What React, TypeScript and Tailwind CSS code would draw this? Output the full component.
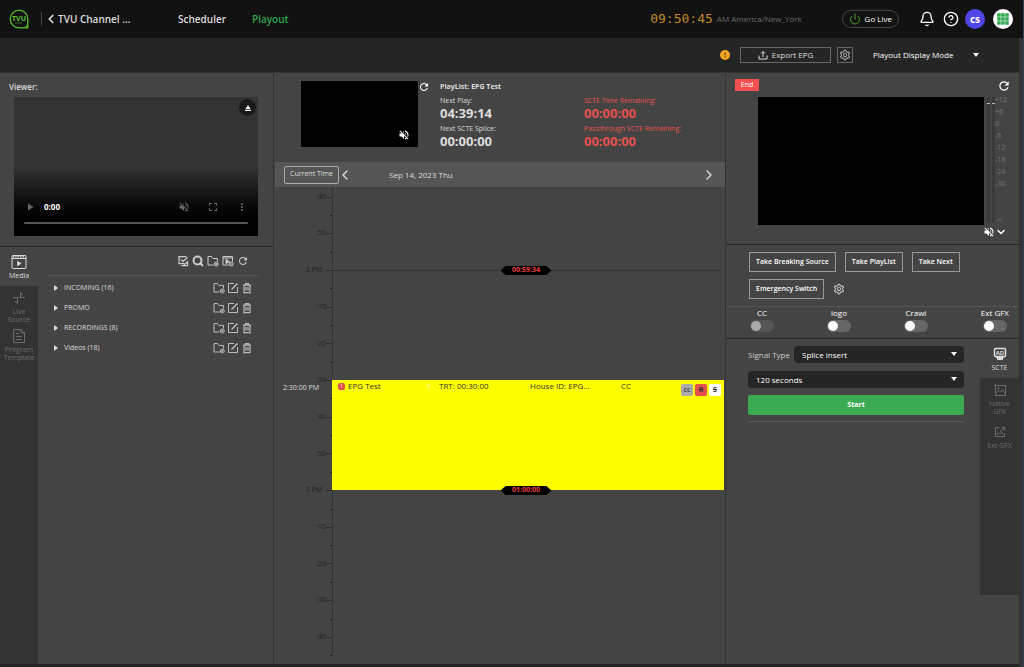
import { ReactNode } from 'react';
import { AiOutlineSetting } from 'react-icons/ai';
import { BsExclamationCircleFill } from 'react-icons/bs';
import {
  MdEject,
  MdFullscreen,
  MdMoreVert,
  MdPlayArrow,
  MdRefresh,
  MdVolumeOff,
} from 'react-icons/md';
import {
  Bell,
  ChevronDown,
  ChevronLeft,
  ChevronRight,
  CircleHelp,
  Power,
  Search,
} from 'lucide-react';

const folders = ['INCOMING (16)', 'PROMO', 'RECORDINGS (8)', 'Videos (18)'];

const ticks = [
  ':40', ':50', '2 PM', ':10', ':20', ':30', ':40', ':50', '3 PM', ':10', ':20', ':30', ':40',
];

const levels = ['+12', '+6', '0', '-6', '-12', '-18', '-24', '-30'];

const switches = [
  { id: 'cc', label: 'CC', disabled: true },
  { id: 'logo', label: 'logo', disabled: false },
  { id: 'crawl', label: 'Crawl', disabled: false },
  { id: 'ext-gfx', label: 'Ext GFX', disabled: false },
];

const Logo = () => (
  <svg className="size-5" viewBox="0 0 40 40" fill="none" aria-label="TVU">
    <path
      d="M20 2.5a17.5 17.5 0 1 0 0 35h17.5V20A17.5 17.5 0 0 0 20 2.5Z"
      stroke="#4fa82e"
      strokeWidth="3"
    />
    <path d="M38 26v12H26c6-1 11-6 12-12Z" fill="#4fa82e" />
    <text
      x="20"
      y="23"
      textAnchor="middle"
      fontSize="14"
      fontWeight="700"
      fontFamily="Open Sans, sans-serif"
      fill="#5cbf36"
    >
      TVU
    </text>
    <path d="M12 28h14" stroke="#35701f" strokeWidth="2" />
  </svg>
);

const AppsIcon = () => (
  <svg className="size-5" viewBox="0 0 20 20">
    <circle cx="10" cy="10" r="10" fill="#fff" />
    {[4, 8, 12].map((y) =>
      [4, 8, 12].map((x) => (
        <rect key={`${x}-${y}`} x={x + 0.2} y={y + 0.2} width="3.5" height="3.5" fill="#2fa84f" />
      ))
    )}
  </svg>
);

const ExportIcon = () => (
  <svg className="size-2.5" viewBox="0 0 10 10" fill="none" stroke="currentColor">
    <path d="M1 5.500v3.500h8V5.500M5 7V1.500M3 3.500l2-2 2 2" />
  </svg>
);

const CheckAllIcon = () => (
  <svg className="size-3" viewBox="0 0 24 24" fill="none" stroke="currentColor" strokeWidth="2.5">
    <path d="M19 3H4v14h8M8 9l4 4 9-8" />
    <path d="M9 21h12v-9" />
    <path d="m12 16 3 3 6-5" />
  </svg>
);

const FolderAddIcon = () => (
  <svg className="size-3" viewBox="0 0 24 24" fill="none" stroke="currentColor" strokeWidth="2">
    <path d="M13 20H2V3h7l3 4h9v6" />
    <circle cx="18.5" cy="18" r="4" />
    <path d="M18.5 16v4M16.5 18h4" />
  </svg>
);

const PlayFileIcon = () => (
  <svg className="size-3" viewBox="0 0 24 24" fill="none" stroke="currentColor" strokeWidth="2">
    <path d="M13 20H2V3h19v10M2 6h19" />
    <path d="m8 9 7 4-7 4Z" fill="currentColor" />
    <circle cx="18.5" cy="18" r="4" />
    <path d="M16.5 18h4" />
  </svg>
);

const EditIcon = () => (
  <svg className="size-3" viewBox="0 0 24 24" fill="none" stroke="currentColor" strokeWidth="2">
    <path d="M14 3H3v18h18V10" />
    <path d="M9 15 21 3" strokeWidth="3" />
  </svg>
);

const TrashIcon = () => (
  <svg className="size-3" viewBox="0 0 24 24" fill="none" stroke="currentColor" strokeWidth="2.5">
    <path d="M4 6h16M9 6V3h6v3M6 6v15h12V6M10 10v7M14 10v7" />
  </svg>
);

const MediaIcon = () => (
  <svg className="size-4" viewBox="0 0 16 16" fill="none" stroke="currentColor">
    <rect x="1" y="1.5" width="14" height="13" rx="1" />
    <path d="M1 4.5h14" />
    <path d="M2 2.5h12" strokeWidth="2" strokeDasharray="1.2 1.2" />
    <path d="m6.2 6.8 4.3 2.7-4.3 2.7Z" fill="currentColor" stroke="none" />
  </svg>
);

const LiveIcon = () => (
  <svg className="size-4" viewBox="0 0 16 16" fill="none" stroke="currentColor">
    <path d="M2 7.500h5.500M8.500 7.500h5.500M9.500 7.500V3M6.500 7.500V13" />
    <path d="M9.500 2.500 12 5M6.500 13.500 4 11" />
  </svg>
);

const TemplateIcon = () => (
  <svg className="size-4" viewBox="0 0 16 16" fill="none" stroke="currentColor">
    <path d="M2.500 1.500h7.500l3.500 3.500v9.500h-11ZM10 1.500V5h3.500M5 5.500h3M5 8.500h6M5 11.500h6" />
  </svg>
);

const ScteIcon = () => (
  <svg className="size-4" viewBox="0 0 16 16" fill="none" stroke="currentColor">
    <rect x="2.500" y="2.500" width="11" height="8" rx="1" strokeWidth="1.500" />
    <text
      x="8"
      y="9"
      textAnchor="middle"
      fontSize="6"
      fontWeight="700"
      fontFamily="Open Sans, sans-serif"
      fill="currentColor"
      stroke="none"
    >
      AD
    </text>
    <path d="M4 11h8l-1.500 3h-5Z" fill="currentColor" stroke="none" />
  </svg>
);

const NativeGfxIcon = () => (
  <svg className="size-4" viewBox="0 0 16 16" fill="none" stroke="currentColor">
    <path d="M3.500 2v11.500H14M2 3.500h11.500V14M4 11l2.500-3 2 2 2-2.500 2.500 4" />
    <circle cx="6.500" cy="6" r="0.700" />
  </svg>
);

const ExtGfxIcon = () => (
  <svg className="size-4" viewBox="0 0 16 16" fill="none" stroke="currentColor">
    <path d="M7 3.500H3.500v9h9V9M9.500 3.500h3V6.500M12.500 3.500 8 8M4.500 11l2-2.500 1.500 1.500 1.500-1.500 2 2" />
  </svg>
);

const CaretDown = ({ className }: { className: string }) => (
  <svg className={className} viewBox="0 0 6 4" fill="currentColor">
    <path d="M0 0h6L3 4Z" />
  </svg>
);

const OutlineButton = ({ children }: { children: ReactNode }) => (
  <button className="h-5 border border-[#999] px-1.5 text-[7px] font-semibold text-white">
    {children}
  </button>
);

const SideTab = ({
  icon,
  label,
  active = false,
}: {
  icon: ReactNode;
  label: string;
  active?: boolean;
}) => (
  <button
    className={`flex w-full flex-col items-center gap-0.5 text-[7px] leading-[8px] whitespace-normal ${
      active ? 'h-[39px] justify-center bg-[#444] text-[#ddd]' : 'px-1 pt-1 text-[#6c6c6c]'
    }`}
  >
    {icon}
    {label}
  </button>
);

const Header = () => (
  <header className="flex h-[38px] items-center bg-[#121212] pr-2.5 pl-[9px]">
    <Logo />
    <span className="ml-3 h-3.5 w-px bg-[#444]" />
    <button className="ml-1 flex w-[132px] flex-none items-center text-[10px] font-semibold text-[#ddd]">
      <ChevronLeft className="-ml-0.5 size-3.5" strokeWidth={3} />
      TVU Channel ...
    </button>
    <nav className="flex gap-[26px] text-[10px] font-semibold">
      <a href="#scheduler" className="text-[#ddd]">
        Scheduler
      </a>
      <a href="#playout" className="text-[#2fa84f]">
        Playout
      </a>
    </nav>
    <div className="ml-auto flex items-center">
      <time className="font-['DejaVu_Sans_Mono',monospace] text-[13px] text-[#c08a2a]">09:50:45</time>
      <span className="ml-1 text-[8px] text-[#6c6c6c]">AM America/New_York</span>
      <button className="ml-10 flex h-[18px] items-center gap-1 rounded-full border border-[#444] px-1.5 text-[8px] text-white">
        <Power className="size-3 text-[#4fa82e]" />
        Go Live
      </button>
      <button className="ml-5 text-white" aria-label="Notifications">
        <Bell className="size-4" />
      </button>
      <button className="ml-2 text-white" aria-label="Help">
        <CircleHelp className="size-4" />
      </button>
      <button className="ml-1.5 size-5 rounded-full bg-[#4f46e5] text-[10px] font-bold text-white">
        cs
      </button>
      <button className="ml-2" aria-label="Apps">
        <AppsIcon />
      </button>
    </div>
  </header>
);

const Toolbar = () => (
  <div className="flex h-[34px] items-center justify-end bg-[#252525] pr-10">
    <BsExclamationCircleFill className="size-2.5 text-[#f5a623]" />
    <button className="ml-2.5 flex h-4 w-[91px] items-center justify-center gap-1 border border-[#666] text-[8px] text-[#ddd]">
      <ExportIcon />
      Export EPG
    </button>
    <button
      className="ml-1.5 flex size-4 items-center justify-center border border-[#666] text-[#bbb]"
      aria-label="Settings"
    >
      <AiOutlineSetting className="size-3" />
    </button>
    <div className="relative ml-5 flex w-[106px] items-center">
      <select
        className="h-4 w-full appearance-none bg-transparent text-[8px] text-white"
        aria-label="Playout Display Mode"
      >
        <option>Playout Display Mode</option>
      </select>
      <CaretDown className="pointer-events-none absolute right-0 h-1 w-1.5 text-white" />
    </div>
  </div>
);

const Viewer = () => (
  <section className="h-[174px] border-b border-[#2a2a2a] pt-2 pr-[15px] pl-[9px]">
    <h2 className="text-[8px] leading-3 font-semibold text-[#ddd]">Viewer:</h2>
    <div className="mt-1 ml-[5px] flex h-[139px] flex-col bg-linear-to-b from-[#333] from-50% to-black px-2.5 pt-0.5 pb-3">
      <button
        className="-mr-2 ml-auto flex size-[17px] items-center justify-center rounded-full bg-[#1a1a1a] text-white"
        aria-label="Eject"
      >
        <MdEject className="size-2.5" />
      </button>
      <div className="mt-auto flex items-center text-[#666]">
        <MdPlayArrow className="size-3" />
        <span className="ml-2 text-[8px] font-bold text-white">0:00</span>
        <MdVolumeOff className="ml-auto size-3" />
        <MdFullscreen className="ml-4 size-3.5" />
        <MdMoreVert className="ml-4 size-3" />
      </div>
      <div className="mt-2 h-0.5 rounded-full bg-[#555]" />
    </div>
  </section>
);

const Library = () => (
  <section className="flex flex-1">
    <div className="w-[38px] bg-[#333]">
      <SideTab active icon={<MediaIcon />} label="Media" />
      <SideTab icon={<LiveIcon />} label="Live Source" />
      <SideTab icon={<TemplateIcon />} label="Program Template" />
    </div>
    <div className="flex-1 pr-3.5 pl-2.5">
      <div className="flex h-[29px] items-center justify-end gap-[3px] border-b border-[#555] pr-2.5 text-[#ccc]">
        <button aria-label="Select all">
          <CheckAllIcon />
        </button>
        <button aria-label="Search">
          <Search className="size-3" strokeWidth={4} />
        </button>
        <button aria-label="New folder">
          <FolderAddIcon />
        </button>
        <button aria-label="Preview">
          <PlayFileIcon />
        </button>
        <button aria-label="Refresh">
          <MdRefresh className="size-3" />
        </button>
      </div>
      <ul className="pt-0.5">
        {folders.map((folder) => (
          <li key={folder} className="flex h-5 items-center px-1.5 text-[7px] text-[#ddd]">
            <svg className="mr-1.5 h-1.5 w-1" viewBox="0 0 4 6" fill="currentColor">
              <path d="M0 0v6l4-3Z" />
            </svg>
            {folder}
            <div className="ml-auto flex items-center gap-0.5 text-[#bbb]">
              <button aria-label="Add folder">
                <FolderAddIcon />
              </button>
              <button aria-label="Rename">
                <EditIcon />
              </button>
              <button aria-label="Delete">
                <TrashIcon />
              </button>
            </div>
          </li>
        ))}
      </ul>
    </div>
  </section>
);

const Countdown = ({ label, value }: { label: string; value: string }) => (
  <div className="h-7">
    <div className="text-[7px] leading-[10px]">{label}</div>
    <div className="text-[13px] leading-[14px] font-bold">{value}</div>
  </div>
);

const PlaylistInfo = () => (
  <section className="flex h-[89px] pt-2 pl-[26px]">
    <div className="flex h-[66px] w-[117px] items-end justify-end bg-black pr-2 pb-1.5 text-white">
      <MdVolumeOff className="size-3" />
    </div>
    <button className="h-3 text-white" aria-label="Refresh">
      <MdRefresh className="size-3" />
    </button>
    <div className="ml-2.5 w-36 text-[#ddd]">
      <div className="mb-[3px] text-[7px] leading-3 font-bold">PlayList: EPG Test</div>
      <Countdown label="Next Play:" value="04:39:14" />
      <Countdown label="Next SCTE Splice:" value="00:00:00" />
    </div>
    <div className="pt-[15px] text-[#e5504f]">
      <Countdown label="SCTE Time Remaining:" value="00:00:00" />
      <Countdown label="Passthrough SCTE Remaining:" value="00:00:00" />
    </div>
  </section>
);

const Splice = ({ time }: { time: string }) => (
  <div className="flex h-[9px] w-[51px] items-center justify-center bg-black text-[7px] font-bold text-[#f04040] [clip-path:polygon(0_50%,10%_0,90%_0,100%_50%,90%_100%,10%_100%)]">
    {time}
  </div>
);

const Timeline = () => (
  <section className="relative flex-1">
    <div className="flex h-[469px] overflow-hidden">
      <ol className="grid h-[477px] w-[57px] flex-none translate-y-[5px] grid-rows-13 text-[7px] text-[#222]">
        {ticks.map((tick, index) => (
          <li key={index}>
            <div className="flex h-2.5 items-center justify-end">
              {tick}
              <span className={`h-px w-1.5 bg-[#2c2c2c] ${tick.endsWith('PM') ? 'ml-1' : ''}`} />
            </div>
            <div className="mt-[13px] ml-auto h-px w-0.5 bg-[#222]" />
          </li>
        ))}
      </ol>
      <div className="w-px bg-[#333]" />
    </div>

    <div className="absolute top-[79px] right-[5px] left-[57px] flex justify-center">
      <div className="absolute top-1 left-0 h-px w-full bg-[#333]" />
      <div className="relative">
        <Splice time="00:59:34" />
      </div>
    </div>
    <span className="absolute top-[195px] left-2 text-[7px] leading-3 text-[#ddd]">2:30:00 PM</span>

    {/* programme block, 2:30 to 3:00 */}
    <article className="absolute top-[193px] right-px left-[57px] grid h-[110px] grid-cols-[97px_91px_91px_1fr_auto] items-start bg-[#ff0] pr-[3px] pl-1.5 text-[8px] leading-3 text-[#333]">
      <div className="flex items-center gap-[3px]">
        <span className="flex size-[7px] items-center justify-center rounded-xs bg-[#e5504f] text-[6px] leading-[7px] text-white">
          !
        </span>
        EPG Test
        <span className="ml-auto pr-1 text-[#ffffc8]">1</span>
      </div>
      <div className="pl-1">TRT: 00:30:00</div>
      <div className="pl-1">House ID: EPG...</div>
      <div className="pl-1">CC</div>
      <div className="flex gap-0.5 pt-1 text-[7px] font-bold">
        <span className="size-3 rounded-xs bg-[#aaa] text-center text-[#555]">cc</span>
        <span className="size-3 rounded-xs bg-[#e5504f] text-center line-through">R</span>
        <span className="size-3 rounded-xs bg-white text-center line-through">S</span>
      </div>
    </article>
    <div className="absolute top-[299px] right-[5px] left-[57px] flex justify-center">
      <Splice time="01:00:00" />
    </div>
  </section>
);

const Output = () => (
  <section className="h-[172px] border-b border-[#2a2a2a] pt-1.5 pl-[9px]">
    <div className="flex h-[18px] items-start justify-between pr-2">
      <button className="h-3 w-6 bg-[#f05050] text-[7px] leading-3 text-white">End</button>
      <button className="text-white" aria-label="Refresh">
        <MdRefresh className="size-3.5" />
      </button>
    </div>
    <div className="flex pl-[23px]">
      <div className="h-32 flex-1 bg-black" />
      <div className="flex w-[35px] pl-[3px]">
        <div className="mr-0.5 h-[125px] w-[3px] bg-[#3a3a3a] pt-1.5">
          <div className="h-px bg-[#bbb]" />
        </div>
        <div className="h-[125px] w-[3px] bg-[#3a3a3a] pt-1.5">
          <div className="h-px bg-[#bbb]" />
        </div>
        <ul className="-mt-[3px] text-[7px] leading-3 text-[#777]">
          {levels.map((level) => (
            <li key={level}>{level}</li>
          ))}
          <li className="mt-6">-∞</li>
        </ul>
      </div>
    </div>
    <div className="flex justify-end pr-3 text-white">
      <button aria-label="Unmute">
        <MdVolumeOff className="size-3" />
      </button>
      <button aria-label="More">
        <ChevronDown className="size-3" strokeWidth={3} />
      </button>
    </div>
  </section>
);

const Actions = () => (
  <section className="flex h-[62px] flex-wrap content-start gap-x-[9px] gap-y-[7px] border-b border-[#555] pt-[7px] pr-12 pl-[23px]">
    <OutlineButton>Take Breaking Source</OutlineButton>
    <OutlineButton>Take PlayList</OutlineButton>
    <OutlineButton>Take Next</OutlineButton>
    <OutlineButton>Emergency Switch</OutlineButton>
    <button className="text-[#ddd]" aria-label="Switch settings">
      <AiOutlineSetting className="size-3" />
    </button>
  </section>
);

const Switches = () => (
  <section className="flex h-8 justify-between border-b border-[#2a2a2a] pr-2.5 pl-6 text-white">
    {switches.map(({ id, label, disabled }) => (
      <div key={id} className="flex flex-col items-center text-[8px] leading-3">
        <label htmlFor={id}>{label}</label>
        <input
          id={id}
          type="checkbox"
          role="switch"
          disabled={disabled}
          className="mt-px flex h-3 w-6 appearance-none rounded-full bg-[#666] p-px before:size-2.5 before:rounded-full before:bg-white disabled:bg-[#555] disabled:before:bg-[#aaa]"
        />
      </div>
    ))}
  </section>
);

const Scte = () => (
  <section className="flex flex-1">
    <form className="flex-1 pt-[7px] pr-4 pl-[22px] text-[8px]">
      <div className="flex h-[17px] items-center">
        <label htmlFor="signal" className="w-[46px] text-[#ccc]">
          Signal Type
        </label>
        <div className="relative flex-1">
          <select
            id="signal"
            className="block h-[17px] w-full appearance-none rounded-sm bg-[#252525] px-2 text-white"
          >
            <option>Splice insert</option>
          </select>
          <CaretDown className="pointer-events-none absolute top-1.5 right-[7px] h-1 w-1.5 text-white" />
        </div>
      </div>
      <div className="relative mt-2">
        <select
          aria-label="Duration"
          className="block h-[17px] w-full appearance-none rounded-sm bg-[#252525] px-2 text-white"
        >
          <option>120 seconds</option>
        </select>
        <CaretDown className="pointer-events-none absolute top-1.5 right-[7px] h-1 w-1.5 text-white" />
      </div>
      <button
        type="button"
        className="mt-[7px] block h-5 w-full rounded-xs bg-[#3aab50] text-[7px] font-bold text-white"
      >
        Start
      </button>
      <div className="mt-1.5 h-px bg-[#5a5a5a]" />
    </form>
    <div className="h-64 w-[39px] bg-[#333]">
      <SideTab active icon={<ScteIcon />} label="SCTE" />
      <SideTab icon={<NativeGfxIcon />} label="Native GFX" />
      <div className="pt-1">
        <SideTab icon={<ExtGfxIcon />} label="Ext GFX" />
      </div>
    </div>
  </section>
);

export default function App() {
  return (
    <div className="flex min-h-screen flex-col overflow-hidden border-r border-[#24474c] bg-[#333] font-['Open_Sans',sans-serif] whitespace-nowrap">
      <Header />
      <div className="mr-1 flex flex-1 flex-col border-b-3 border-[#252525]">
        <Toolbar />
        <main className="flex flex-1 border-t border-[#333] bg-[#444]">
          <div className="flex w-[274px] flex-none flex-col border-r border-[#333]">
            <Viewer />
            <Library />
          </div>
          <div className="ml-px flex min-w-0 flex-1 flex-col">
            <PlaylistInfo />
            <div className="flex h-[25px] items-center bg-[#555] pr-2 pl-[9px] text-[#ddd]">
              <button className="h-[18px] w-[55px] rounded-xs border border-[#aaa] text-[7px]">
                Current Time
              </button>
              <button className="-ml-0.5" aria-label="Previous day">
                <ChevronLeft className="size-4" />
              </button>
              <span className="ml-9 text-[8px]">Sep 14, 2023 Thu</span>
              <button className="ml-auto" aria-label="Next day">
                <ChevronRight className="size-4" />
              </button>
            </div>
            <Timeline />
          </div>
          <div className="flex w-[294px] flex-none flex-col border-l border-[#333]">
            <Output />
            <Actions />
            <Switches />
            <Scte />
          </div>
        </main>
      </div>
    </div>
  );
}
